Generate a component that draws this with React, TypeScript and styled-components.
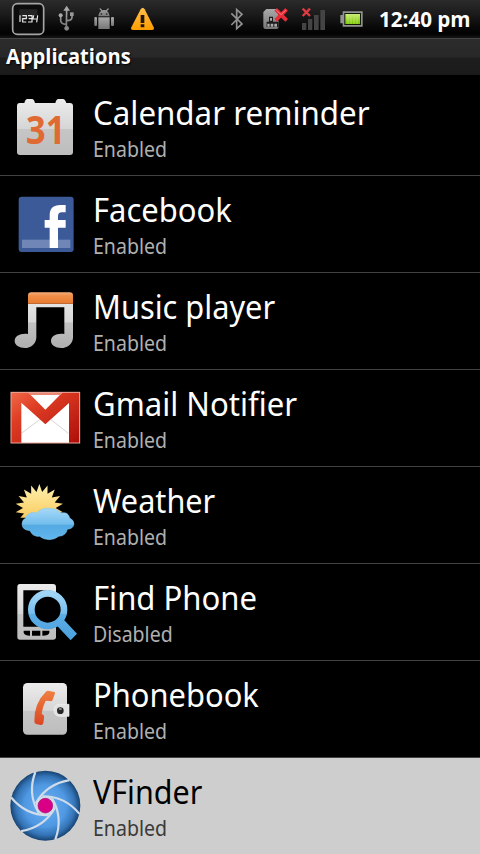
import React from 'react';
import styled, { createGlobalStyle } from 'styled-components';

const GlobalStyle = createGlobalStyle`
  html, body { margin: 0; padding: 0; background: #000; overflow: hidden; }
  * { box-sizing: border-box; }
`;

const Screen = styled.div`
  width: 480px;
  height: 854px;
  display: flex;
  flex-direction: column;
  overflow: hidden;
  background: #000;
  font-family: 'Noto Sans', 'Open Sans', sans-serif;
`;

const StatusBar = styled.header`
  height: 38px;
  flex: none;
  display: flex;
  align-items: stretch;
  justify-content: space-between;
  background: linear-gradient(#2b2b2b 0, #1b1b1b 14px, #090909 27px, #020202 34px, #161616 38px);
`;

const StatusIcons = styled.svg`
  display: block;
  height: 38px;
  flex: none;
`;

const StatusRight = styled.div`
  display: flex;
`;

const Clock = styled.time`
  width: 101px;
  height: 38px;
  line-height: 38px;
  font-family: 'Open Sans', 'Noto Sans', sans-serif;
  font-size: 21px;
  font-weight: 700;
  color: #fff;
  white-space: nowrap;
`;

const TitleBar = styled.div`
  height: 37px;
  flex: none;
  border-top: 1px solid #454545;
  padding-left: 6px;
  background: linear-gradient(#2c2c2c 0, #282828 18px, #1d1d1d 19px, #1b1b1b 100%);
`;

const Heading = styled.h1`
  margin: 0;
  line-height: 34px;
  font-family: 'Open Sans', 'Noto Sans', sans-serif;
  font-size: 21px;
  font-weight: 700;
  color: #fff;
  text-shadow: 1px 1px 2px #000;
`;

const Stretch = styled.span<{ $x: number }>`
  display: inline-block;
  white-space: nowrap;
  transform: scaleX(${(p) => p.$x});
  transform-origin: 0 50%;
`;

const List = styled.ul`
  margin: 0;
  padding: 4px 0 0;
  list-style: none;
`;

const Row = styled.li<{ $selected?: boolean }>`
  height: 97px;
  display: flex;
  border-bottom: 1px solid #424242;
  background: ${(p) => (p.$selected ? '#cecece' : '#000')};
  color: ${(p) => (p.$selected ? '#000' : '#fff')};
`;

const AppIcon = styled.svg`
  display: block;
  width: 93px;
  height: 96px;
  flex: none;
`;

const Labels = styled.div`
  display: flex;
  flex-direction: column;
  padding-top: 14px;
`;

const Name = styled.div`
  height: 43px;
  line-height: 40px;
  font-size: 33px;
`;

const State = styled.div<{ $selected?: boolean }>`
  height: 30px;
  line-height: 26px;
  font-size: 21px;
  color: ${(p) => (p.$selected ? '#3a3a3a' : '#b0b0b0')};
`;

const IconDefs = () => (
  <svg width="0" height="0" style={{ position: 'absolute' }} aria-hidden>
    <defs>
      <linearGradient id="metal" x1="0" y1="0" x2="0" y2="1">
        <stop offset="0" stopColor="#ececec" />
        <stop offset=".53" stopColor="#d6d6d6" />
        <stop offset=".54" stopColor="#c6c6c6" />
        <stop offset="1" stopColor="#bdbdbd" />
      </linearGradient>
      <linearGradient id="note" x1="0" y1="60" x2="0" y2="225" gradientUnits="userSpaceOnUse">
        <stop offset="0" stopColor="#ececec" />
        <stop offset=".53" stopColor="#d8d8d8" />
        <stop offset=".54" stopColor="#c2c2c2" />
        <stop offset="1" stopColor="#b0b0b0" />
      </linearGradient>
      <linearGradient id="orange" x1="0" y1="0" x2="0" y2="1">
        <stop offset="0" stopColor="#f7ae79" />
        <stop offset=".3" stopColor="#f0904b" />
        <stop offset="1" stopColor="#e9792f" />
      </linearGradient>
      <linearGradient id="gmail" x1="0" y1="0" x2="1" y2="1">
        <stop offset="0" stopColor="#f06a4a" />
        <stop offset=".3" stopColor="#df3f25" />
        <stop offset="1" stopColor="#ad0d08" />
      </linearGradient>
      <linearGradient id="sun" x1="0" y1="0" x2="0" y2="1">
        <stop offset="0" stopColor="#fff0b0" />
        <stop offset=".5" stopColor="#fbd777" />
        <stop offset="1" stopColor="#f4b14a" />
      </linearGradient>
      <linearGradient id="cloud" x1="0" y1="0" x2="0" y2="1">
        <stop offset="0" stopColor="#a6d9f8" />
        <stop offset=".51" stopColor="#72bdec" />
        <stop offset=".54" stopColor="#53a9e2" />
        <stop offset="1" stopColor="#62b8ec" />
      </linearGradient>
      <linearGradient id="glass" x1="0" y1="78" x2="0" y2="230" gradientUnits="userSpaceOnUse">
        <stop offset="0" stopColor="#a4d8f8" />
        <stop offset=".46" stopColor="#78bfee" />
        <stop offset=".48" stopColor="#5caee5" />
        <stop offset="1" stopColor="#4ba0dc" />
      </linearGradient>
      <linearGradient id="handset" x1="0" y1="0" x2="0" y2="1">
        <stop offset="0" stopColor="#f08040" />
        <stop offset="1" stopColor="#d94624" />
      </linearGradient>
      <radialGradient id="lens">
        <stop offset="0" stopColor="#6ab0f4" />
        <stop offset=".6" stopColor="#4f98e2" />
        <stop offset=".84" stopColor="#3474b6" />
        <stop offset="1" stopColor="#174372" />
      </radialGradient>
      <linearGradient id="grey" x1="0" y1="0" x2="0" y2="1">
        <stop offset="0" stopColor="#a9a9a9" />
        <stop offset="1" stopColor="#777" />
      </linearGradient>
      <linearGradient id="warn" x1="0" y1="0" x2="0" y2="1">
        <stop offset="0" stopColor="#ffc04a" />
        <stop offset="1" stopColor="#ff9d00" />
      </linearGradient>
      <linearGradient id="charge" x1="0" y1="0" x2="0" y2="1">
        <stop offset="0" stopColor="#c9ee70" />
        <stop offset="1" stopColor="#78c400" />
      </linearGradient>
    </defs>
  </svg>
);

const CalendarIcon = () => (
  <g>
    <path
      d="M59 72H73Q76 60 82 60H96Q102 60 105 72H166Q169 60 175 60H189Q195 60 199 72H210Q219 72 219 81V219Q219 228 210 228H60Q51 228 51 219V81Q51 72 59 72Z"
      fill="url(#metal)"
    />
    <text x="78" y="195" fontFamily="Open Sans" fontWeight="700" fontSize="117" textLength="118" lengthAdjust="spacingAndGlyphs" fill="#df6a32">31</text>
  </g>
);

const FacebookIcon = () => (
  <g>
    <rect x="56" y="62" width="165" height="166" rx="9" fill="#3c5a98" />
    <rect x="66" y="191" width="145" height="25" fill="#6f86b7" />
    <path d="M149 216V155H134V132H149V118Q149 87 181 87H197V109H185Q174 109 174 121V132H197V155H174V216Z" fill="#fff" />
  </g>
);

const MusicIcon = () => (
  <g>
    <path
      d="M84 92H219V194C218 212 202 225 184 225C166 225 153 216 153 204C153 190 168 180 193 183V103H109V194C108 212 92 225 75 225C57 225 44 216 44 204C44 190 60 180 84 183Z"
      fill="url(#note)"
    />
    <path d="M84 92V68Q84 58 94 58H209Q219 58 219 68V92Z" fill="url(#orange)" />
  </g>
);

const GmailIcon = () => (
  <g>
    <rect x="33" y="67" width="206" height="152" fill="#fff" />
    <path d="M64 190L119 149M205 190L153 149" stroke="#d8d4d4" strokeWidth="3" />
    <path d="M33 67H84L136 119L188 67H239V219H207V99L136 163L64 98V219H33Z" fill="url(#gmail)" />
    <path d="M82 67L90 75H180L190 67Z" fill="#e98773" />
    <rect x="33" y="67" width="206" height="152" fill="none" stroke="#eba596" strokeWidth="3" />
  </g>
);

const sunRays = Array.from({ length: 36 }, (_, i) => {
  const a = (i * Math.PI) / 18 - Math.PI / 2;
  const r = i % 2 === 0 ? 72 : 49;
  return `${(118 + r * Math.cos(a)).toFixed(1)},${(123 + r * Math.sin(a)).toFixed(1)}`;
}).join(' ');

const WeatherIcon = () => (
  <g>
    <polygon points={sunRays} fill="url(#sun)" />
    <path d="M40 152H170V215H40Z" fill="#000" />
    <path
      d="M88 140Q97 133 110 138Q122 122 147 124Q172 124 183 138Q205 133 209 153Q222 159 222 171Q220 185 202 187Q198 207 176 208Q164 218 148 218Q130 218 119 208Q98 210 90 191Q66 189 66 171Q66 158 78 153Q77 145 88 140Z"
      fill="url(#cloud)"
      stroke="#80c6f0"
      strokeWidth="1.5"
    />
  </g>
);

const FindIcon = () => (
  <g>
    <path
      fillRule="evenodd"
      fill="url(#metal)"
      d="M60 60H159Q168 60 168 69V219Q168 227 159 227H60Q52 227 52 219V69Q52 60 60 60ZM70 79V188H151V79ZM71 200V206Q74 215 90 215V200ZM96 200V215H121V200ZM127 200V215Q146 215 148 206V200Z"
    />
    <circle cx="143" cy="136" r="45" fill="#000" />
    <path d="M171 185L193 169L231 209L212 229Z" fill="url(#glass)" />
    <circle cx="143" cy="137" r="49" fill="none" stroke="url(#glass)" strokeWidth="20" />
    <path d="M99 120A48 48 0 0 1 186 115" fill="none" stroke="#b3dffb" strokeWidth="2" opacity=".6" />
  </g>
);

const PhonebookIcon = () => (
  <g>
    <rect x="69" y="66" width="132" height="155" rx="13" fill="url(#metal)" />
    <path d="M207 130H176Q162 132 162 149Q163 164 178 166H207Z" fill="#e2e2e2" stroke="#f3f3f3" strokeWidth="2" />
    <circle cx="181" cy="149" r="10" fill="#252525" />
    <ellipse cx="181" cy="144" rx="5" ry="3" fill="#8c8c8c" />
    <path
      d="M139 91Q143 88 148 90L163 93Q167 94 164 100L158 116Q155 122 150 120L137 119Q128 136 125 158L131 163Q133 166 132 171L130 187Q128 193 122 192L108 189Q103 188 103 181Q102 127 139 91Z"
      fill="url(#handset)"
    />
  </g>
);

const VFinderIcon = () => (
  <g transform="translate(0 -3)">
    <circle cx="136" cy="146" r="105" fill="url(#lens)" />
    <g fill="none" stroke="#d0dcea" strokeWidth="6.5">
      {[0, 60, 120, 180, 240, 300].map((angle) => (
        <path key={angle} transform={`rotate(${angle} 136 146)`} d="M106 45C90 88 92 128 116 168" />
      ))}
    </g>
    <circle cx="136" cy="146" r="29" fill="#d0dcea" />
    <circle cx="136" cy="146" r="22" fill="#d90086" stroke="#a30a70" strokeWidth="2" />
  </g>
);

interface AppEntry {
  name: string;
  width: number;
  state: string;
  Icon: React.FC;
  selected?: boolean;
}

const apps: AppEntry[] = [
  { name: 'Calendar reminder', width: 0.948, state: 'Enabled', Icon: CalendarIcon },
  { name: 'Facebook', width: 0.938, state: 'Enabled', Icon: FacebookIcon },
  { name: 'Music player', width: 0.932, state: 'Enabled', Icon: MusicIcon },
  { name: 'Gmail Notifier', width: 0.942, state: 'Enabled', Icon: GmailIcon },
  { name: 'Weather', width: 0.928, state: 'Enabled', Icon: WeatherIcon },
  { name: 'Find Phone', width: 0.941, state: 'Disabled', Icon: FindIcon },
  { name: 'Phonebook', width: 0.936, state: 'Enabled', Icon: PhonebookIcon },
  { name: 'VFinder', width: 0.924, state: 'Enabled', Icon: VFinderIcon, selected: true },
];

const NotificationIcons = () => (
  <StatusIcons width="160" viewBox="0 0 480 114">
    <rect x="38" y="11" width="93" height="92" rx="14" fill="#0c0c0c" stroke="#a5a5a5" strokeWidth="5" />
    <path d="M58 28H112V46L58 66Z" fill="#242424" />
    <g fill="none" stroke="#e6e6e6" strokeWidth="3.5">
      <path d="M60 46V66M67 47H79V56H68V66H79M84 47H96V66H84M86 56H96M101 46L99 57H112M113 46L110 67" />
    </g>
    <g fill="none" stroke="url(#grey)" strokeWidth="5">
      <path d="M200 28L199 82M199 73Q181 72 182 60V48M200 62Q216 62 216 52V42" />
    </g>
    <path d="M200 17L210 32H190Z" fill="#aaa" />
    <circle cx="182" cy="46" r="6" fill="#aaa" />
    <rect x="210" y="37" width="11" height="11" fill="#999" />
    <circle cx="200" cy="85" r="7" fill="#888" />
    <g fill="url(#grey)">
      <path d="M295 49Q296 37 304 33L298 26L301 25L307 31Q312 29 318 31L324 25L327 27L321 33Q328 38 329 49Z" />
      <rect x="295" y="52" width="34" height="35" />
      <rect x="283" y="51" width="8" height="27" rx="3" />
      <rect x="333" y="51" width="9" height="27" rx="3" />
    </g>
    <circle cx="304" cy="42" r="2.5" fill="#181818" />
    <circle cx="320" cy="42" r="2.5" fill="#181818" />
    <path d="M422 28Q428 19 434 28L461 82Q464 90 456 90H399Q391 90 394 82Z" fill="url(#warn)" />
    <path d="M422 45H433V69H422ZM422 73H433V82H422Z" fill="#20160a" />
  </StatusIcons>
);

const SystemIcons = () => (
  <StatusIcons width="159" viewBox="0 0 477 114">
    <path d="M34 40L66 72L50 86V29L66 43L34 75" fill="none" stroke="#929292" strokeWidth="5" />
    <path d="M139 27H174V62H176V80Q176 87 169 87H137Q130 87 130 80V36Z" fill="url(#grey)" />
    <path d="M147 50H159V65H176V81H140V65H147Z" fill="#1b1b1b" />
    <path d="M142 71H149V80H142ZM152 71H160V80H152ZM163 71H171V80H163ZM150 54H156V62H150Z" fill="#aaa" />
    <path d="M167 28L200 61M200 28L167 61" stroke="#e92d38" strokeWidth="11" />
    <path d="M169 30L183 44L198 30" fill="none" stroke="#f77c80" strokeWidth="3" />
    <g fill="#444">
      <path d="M246 69H259V90H246ZM264 57H277V90H264ZM282 45H296V90H282ZM301 30H315V90H301Z" />
    </g>
    <path d="M248 26L270 48M270 26L248 48" stroke="#e03a42" strokeWidth="7" />
    <path d="M368 34H428V80H368V70H361V45H368Z" fill="#929292" />
    <rect x="373" y="39" width="50" height="36" fill="#101a00" />
    <rect x="376" y="42" width="44" height="30" fill="url(#charge)" />
    <path d="M384 42V72M393 42V72M402 42V72M411 42V72" stroke="#d6f394" strokeWidth="1.5" />
  </StatusIcons>
);

export default function App() {
  return (
    <Screen>
      <GlobalStyle />
      <IconDefs />
      <StatusBar>
        <NotificationIcons />
        <StatusRight>
          <SystemIcons />
          <Clock><Stretch $x={0.98}>12:40 pm</Stretch></Clock>
        </StatusRight>
      </StatusBar>
      <TitleBar>
        <Heading><Stretch $x={0.958}>Applications</Stretch></Heading>
      </TitleBar>
      <List>
        {apps.map(({ name, width, state, Icon, selected }) => (
          <Row key={name} $selected={selected}>
            <AppIcon viewBox="0 0 279 288"><Icon /></AppIcon>
            <Labels>
              <Name><Stretch $x={width}>{name}</Stretch></Name>
              <State $selected={selected}><Stretch $x={0.93}>{state}</Stretch></State>
            </Labels>
          </Row>
        ))}
      </List>
    </Screen>
  );
}
